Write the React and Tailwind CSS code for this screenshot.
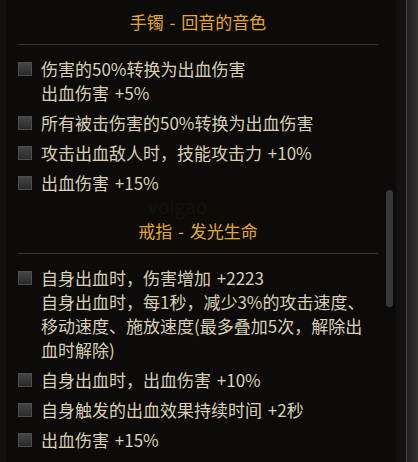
import React from 'react';

const sections = [
  {
    title: '手镯 - 回音的音色',
    items: [
      ['伤害的50%转换为出血伤害', '出血伤害 +5%'],
      ['所有被击伤害的50%转换为出血伤害'],
      ['攻击出血敌人时，技能攻击力 +10%'],
      ['出血伤害 +15%'],
    ],
  },
  {
    title: '戒指 - 发光生命',
    items: [
      [
        '自身出血时，伤害增加 +2223',
        '自身出血时，每1秒，减少3%的攻击速度、移动速度、施放速度(最多叠加5次，解除出血时解除)',
      ],
      ['自身出血时，出血伤害 +10%'],
      ['自身触发的出血效果持续时间 +2秒'],
      ['出血伤害 +15%'],
    ],
  },
];

const Checkbox = () => (
  <div className="mt-[5px] h-[14px] w-[14px] shrink-0 border border-[#4e4d4c] bg-gradient-to-b from-[#474646] to-[#2b2a2a]" />
);

const Section = ({ title, items, first }) => (
  <div className={first ? '' : 'mt-[24px]'}>
    <div className="h-6 text-center text-[17px] leading-6 text-[#e6a829] [word-spacing:2px]">{title}</div>
    <div className="mt-[10px] h-px bg-[#383533]" />
    <div className="mt-[12px] flex flex-col gap-[6px]">
      {items.map((lines, i) => (
        <div key={i} className="flex items-start gap-[9px]">
          <Checkbox />
          <div className="flex-1 text-[17px] leading-6 text-[#d8cfb5] [word-spacing:2px]">
            {lines.map((l, j) => (
              <div key={j}>{l}</div>
            ))}
          </div>
        </div>
      ))}
    </div>
  </div>
);

export default function App() {
  return (
    <div
      className="flex h-[462px] w-[418px] overflow-hidden bg-[#0c0b0a]"
      style={{ fontFamily: '"Noto Sans CJK SC", sans-serif' }}
    >
      <div className="w-[6px] bg-[#121110]" />
      <div className="relative flex w-[390px]">
        <div className="w-[372px] pl-[12px] pt-[10px]">
          {sections.map((s, i) => (
            <Section key={i} {...s} first={i === 0} />
          ))}
        </div>
        <div className="absolute left-[142px] top-[196px] select-none text-[19px] leading-[19px] text-[#141211]">volgao</div>
        <div className="w-[18px] pl-[8px] pt-[190px]">
          <div className="h-[117px] w-[7px] rounded-full bg-[#38383a]" />
        </div>
      </div>
      <div className="w-[10px] bg-[#121111]" />
      <div className="w-px bg-[#4c4a4a]" />
      <div className="flex-1 bg-gradient-to-r from-[#1e1c1c] to-[#363232]" />
    </div>
  );
}
